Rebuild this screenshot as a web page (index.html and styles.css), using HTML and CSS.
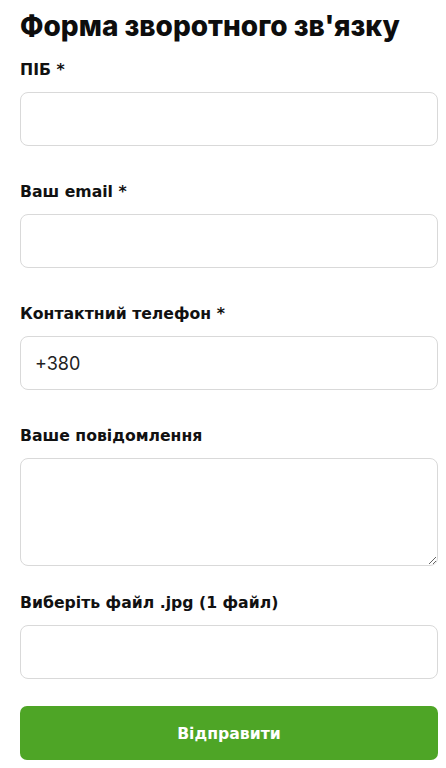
FILE: index.html
```html
<!DOCTYPE html>
<html lang="uk">
<head>
<meta charset="utf-8">
<title>Форма зворотного зв'язку</title>
<link rel="stylesheet" href="styles.css">
</head>
<body>
<form class="feedback">
  <h1 class="title">Форма зворотного зв'язку</h1>
  <div class="field">
    <label class="label" for="name">ПІБ *</label>
    <input class="input" id="name" type="text">
  </div>
  <div class="field">
    <label class="label" for="email">Ваш email *</label>
    <input class="input" id="email" type="email">
  </div>
  <div class="field">
    <label class="label" for="phone">Контактний телефон *</label>
    <input class="input" id="phone" type="tel" value="+380">
  </div>
  <div class="field field-message">
    <label class="label" for="msg">Ваше повідомлення</label>
    <textarea class="input textarea" id="msg"></textarea>
  </div>
  <div class="field">
    <label class="label" for="file">Виберіть файл .jpg (1 файл)</label>
    <label class="input file-box"><input class="file-input" id="file" type="file" accept=".jpg"></label>
  </div>
  <button class="submit" type="button">Відправити</button>
</form>
</body>
</html>
```
FILE: styles.css
```css
html, body {
  margin: 0;
  padding: 0;
  background: #fff;
}
body {
  font-family: "DejaVu Sans", sans-serif;
  color: #111;
}
.feedback {
  display: flex;
  flex-direction: column;
  padding: 8px 8px 0 20px;
}
.title {
  margin: 0 0 14px;
  font-family: Inter, "DejaVu Sans", sans-serif;
  font-size: 28px;
  line-height: 36px;
  font-weight: 800;
  color: #0d0d0d;
}
.field {
  display: flex;
  flex-direction: column;
  margin-bottom: 34px;
}
.field-message {
  margin-bottom: 25px;
}
.label {
  font-size: 15.7px;
  line-height: 24px;
  font-weight: 700;
  margin-bottom: 10px;
  color: #111;
}
.input {
  box-sizing: border-box;
  display: block;
  width: 100%;
  height: 54px;
  margin: 0;
  padding: 0 14px;
  border: 1px solid #d9d9d9;
  border-radius: 8px;
  font-family: Inter, sans-serif;
  font-size: 18px;
  font-weight: 400;
  color: #222;
  background: #fff;
  outline: none;
}
.textarea {
  height: 108px;
  resize: vertical;
  padding-top: 12px;
}
.file-box {
  cursor: pointer;
}
.file-input {
  display: none;
}
.submit {
  height: 54px;
  margin-top: -7px;
  border: none;
  border-radius: 7px;
  background: #4ea526;
  color: #fff;
  font-family: "DejaVu Sans", sans-serif;
  font-size: 15.7px;
  font-weight: 700;
  cursor: pointer;
}
```
